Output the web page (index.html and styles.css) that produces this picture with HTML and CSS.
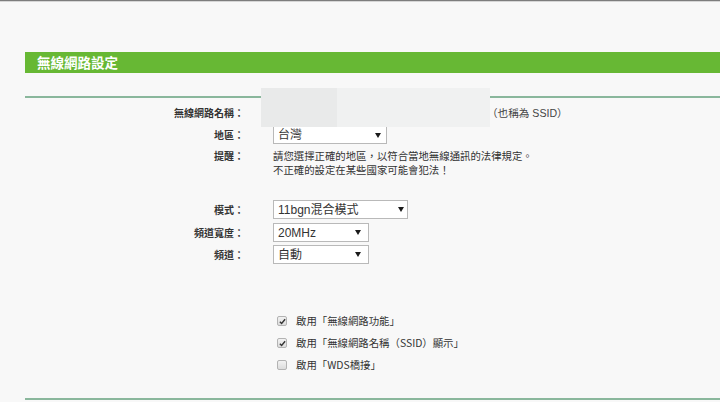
FILE: index.html
```html
<!DOCTYPE html>
<html lang="zh-Hant">
<head>
<meta charset="utf-8">
<title>無線網路設定</title>
<link rel="stylesheet" href="styles.css">
</head>
<body>
<div class="topline"></div>
<div class="panel">
  <div class="title">無線網路設定</div>
  <div class="rule"></div>
  <div class="form">
    <div class="row r-ssid">
      <div class="label">無線網路名稱：</div>
      <div class="value">
        <span class="ssid-box"></span>
        <span class="note">（也稱為 SSID）</span>
        <span class="mask"><span class="mask-a"></span><span class="mask-b"></span></span>
      </div>
    </div>
    <div class="row r-region">
      <div class="label">地區：</div>
      <div class="value"><div class="select w-region"><span>台灣</span><svg class="arrow" viewBox="0 0 6 5" width="6" height="5"><polygon points="0,0 6,0 3,5" fill="#1a1a1a"/></svg></div></div>
    </div>
    <div class="row r-remind">
      <div class="label">提醒：</div>
      <div class="value text">請您選擇正確的地區，以符合當地無線通訊的法律規定。<br>不正確的設定在某些國家可能會犯法！</div>
    </div>
    <div class="row r-mode">
      <div class="label">模式：</div>
      <div class="value"><div class="select w-mode"><span>11bgn混合模式</span><svg class="arrow" viewBox="0 0 6 5" width="6" height="5"><polygon points="0,0 6,0 3,5" fill="#1a1a1a"/></svg></div></div>
    </div>
    <div class="row r-width">
      <div class="label">頻道寬度：</div>
      <div class="value"><div class="select w-small"><span>20MHz</span><svg class="arrow" viewBox="0 0 6 5" width="6" height="5"><polygon points="0,0 6,0 3,5" fill="#1a1a1a"/></svg></div></div>
    </div>
    <div class="row r-chan">
      <div class="label">頻道：</div>
      <div class="value"><div class="select w-small"><span>自動</span><svg class="arrow" viewBox="0 0 6 5" width="6" height="5"><polygon points="0,0 6,0 3,5" fill="#1a1a1a"/></svg></div></div>
    </div>
  </div>
  <div class="checks">
    <div class="check-row"><span class="cb checked"><svg viewBox="0 0 8 8" width="7" height="7"><polyline points="1,4.2 3,6.2 7,1.5" fill="none" stroke="#333" stroke-width="1.6"/></svg></span><span class="text">啟用「無線網路功能」</span></div>
    <div class="check-row"><span class="cb checked"><svg viewBox="0 0 8 8" width="7" height="7"><polyline points="1,4.2 3,6.2 7,1.5" fill="none" stroke="#333" stroke-width="1.6"/></svg></span><span class="text">啟用「無線網路名稱（SSID）顯示」</span></div>
    <div class="check-row"><span class="cb"></span><span class="text">啟用「WDS橋接」</span></div>
  </div>
  <div class="rule bottom"></div>
</div>
</body>
</html>
```

FILE: styles.css
```css
html, body {
  margin: 0;
  padding: 0;
  background: #f8f8f8;
  font-family: "Liberation Sans", "Noto Sans CJK TC", sans-serif;
  color: #333;
  overflow: hidden;
}
.topline {
  height: 1px;
  background: #7d7d7d;
  border-bottom: 1px solid #d6d6d6;
}
.panel {
  margin-left: 25px;
  margin-top: 50px;
}
.title {
  height: 21px;
  background: #67b834;
  color: #fff;
  font-family: "Noto Sans CJK TC", sans-serif;
  font-weight: bold;
  font-size: 13.5px;
  line-height: 21px;
  padding-left: 12px;
}
.rule {
  margin-top: 23px;
  height: 2px;
  background: #8ab79c;
}
.rule.bottom {
  margin-top: 22px;
}
.form {
  display: flex;
  flex-direction: column;
}
.row {
  display: grid;
  grid-template-columns: 219px 1fr;
  column-gap: 29px;
  align-items: center;
}
.label {
  text-align: right;
  font-family: "Noto Sans CJK TC", sans-serif;
  font-weight: bold;
  font-size: 10px;
  line-height: 14px;
  color: #333;
}
.value {
  display: flex;
  align-items: center;
  font-family: "Liberation Sans", "Noto Sans CJK TC", sans-serif;
  font-size: 10.4px;
  line-height: 14px;
}
.text {
  font-family: "Noto Sans CJK TC", sans-serif;
  font-size: 10.4px;
  line-height: 14px;
  color: #333;
}
.r-ssid { margin-top: 4px; height: 22px; }
.r-ssid .value { position: relative; height: 22px; }
.ssid-box {
  width: 208px;
  height: 18px;
  box-sizing: border-box;
  border: 1px solid #ddd;
  background: #fff;
  margin-right: 6px;
}
.note {
  font-family: "Liberation Sans", "Noto Sans CJK TC", sans-serif;
  font-size: 10.6px;
  color: #444;
}
.mask {
  position: absolute;
  left: -12px;
  top: -14px;
  display: flex;
  height: 39px;
}
.mask-a { width: 76px; background: #e9eaea; }
.mask-b { width: 153px; background: #f0f1f1; }
.r-region { margin-top: 2px; height: 18px; }
.r-remind { margin-top: 5px; align-items: start; }
.r-mode { margin-top: 23px; height: 19px; }
.r-width { margin-top: 4px; height: 19px; }
.r-chan { margin-top: 3px; height: 19px; }
.select {
  box-sizing: border-box;
  height: 19px;
  background: #fff;
  border: 1px solid #b9b9b9;
  display: flex;
  align-items: center;
  justify-content: space-between;
  padding: 0 3px 0 4px;
  font-family: "Liberation Sans", "Noto Sans CJK TC", sans-serif;
  font-size: 12px;
  color: #333;
}
.w-region { width: 114px; height: 18px; padding-right: 5px; }
.w-mode { width: 135px; }
.w-small { width: 96px; padding-right: 7px; }
.arrow {
  display: block;
  flex: none;
}
.checks {
  margin-top: 46px;
  padding-left: 252px;
  display: flex;
  flex-direction: column;
}
.check-row {
  height: 22px;
  display: flex;
  align-items: center;
}
.cb {
  box-sizing: border-box;
  width: 10px;
  height: 10px;
  border: 1px solid #b3b3b3;
  border-radius: 2px;
  background: linear-gradient(#f2f2f2, #dcdcdc);
  display: flex;
  align-items: center;
  justify-content: center;
  margin-right: 9px;
}
```
